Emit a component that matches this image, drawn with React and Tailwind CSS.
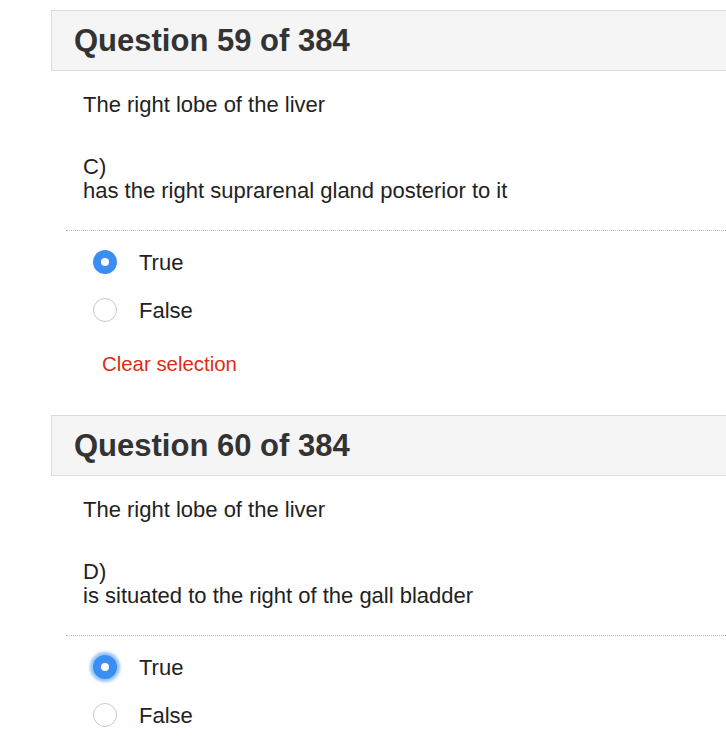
import React from "react";

function Radio({ checked, focused, label }) {
  return (
    <div className="flex items-center h-[48px]">
      <div className="w-[42px] shrink-0" />
      {checked ? (
        <div
          className={
            "w-[24px] h-[24px] rounded-full bg-[#3a8ef2] flex items-center justify-center shrink-0 " +
            (focused ? "shadow-[0_0_3px_3px_rgba(58,142,242,0.55)]" : "")
          }
        >
          <div className="w-[8px] h-[8px] rounded-full bg-white" />
        </div>
      ) : (
        <div className="w-[24px] h-[24px] rounded-full border border-[#c8c8c8] bg-white shrink-0" />
      )}
      <span className="ml-[22px] text-[22px] text-[#222]">{label}</span>
    </div>
  );
}

function Question({ num, letter, text, focused, showClear }) {
  return (
    <div>
      <div className="h-[61px] border border-[#dcdcdc] bg-[#f5f5f5] flex items-center pl-[22px]">
        <h2 className="text-[31px] font-bold text-[#333] leading-none">
          Question {num} of 384
        </h2>
      </div>
      <div className="pl-[32px] pt-[22px] text-[22px] leading-[24px] text-[#222]">
        <p>The right lobe of the liver</p>
        <p className="mt-[38px]">{letter})</p>
        <p>{text}</p>
      </div>
      <div className="ml-[15px] mt-[27px] border-t border-dotted border-[#bbb]" />
      <div className="pt-[7px]">
        <Radio checked focused={focused} label="True" />
        <Radio checked={false} label="False" />
      </div>
      {showClear && (
        <div className="pl-[51px] pt-[18px] pb-[39px] text-[20.4px] leading-[24px] text-[#dd2c12]">
          Clear selection
        </div>
      )}
    </div>
  );
}

export default function App() {
  return (
    <div
      className="w-[726px] h-[750px] overflow-hidden bg-white"
      style={{ fontFamily: '"Liberation Sans", Arial, sans-serif' }}
    >
      <div className="pl-[51px] pt-[10px] w-[800px]">
        <Question
          num={59}
          letter="C"
          text="has the right suprarenal gland posterior to it"
          showClear
        />
        <Question
          num={60}
          letter="D"
          text="is situated to the right of the gall bladder"
          focused
        />
      </div>
    </div>
  );
}
